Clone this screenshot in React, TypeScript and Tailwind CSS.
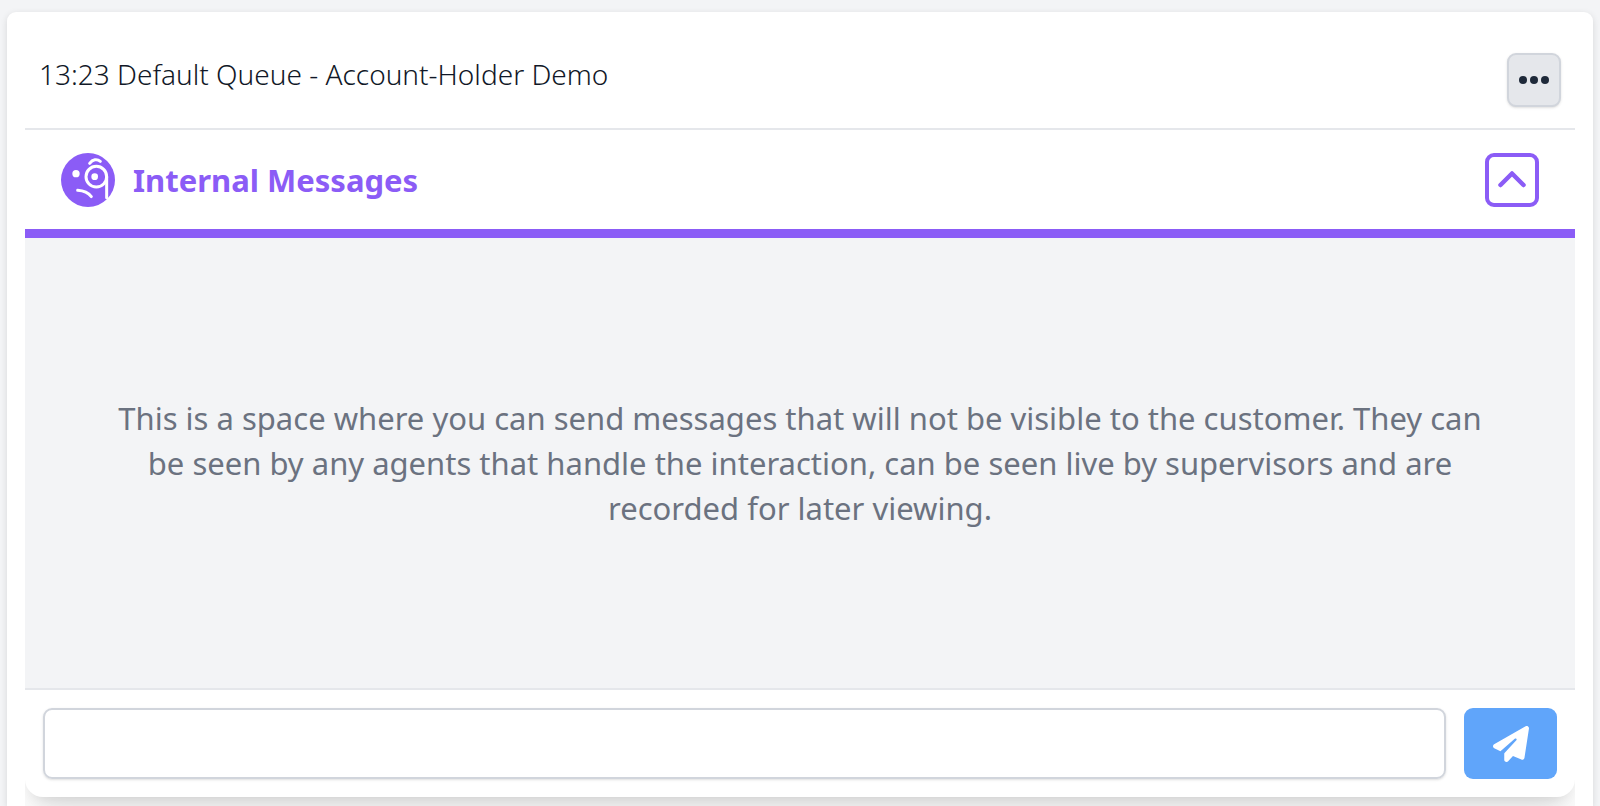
import { useState } from "react";
import { FaPaperPlane } from "react-icons/fa6";

const EMPTY_TEXT =
  "This is a space where you can send messages that will not be visible to the customer. They can be seen by any agents that handle the interaction, can be seen live by supervisors and are recorded for later viewing.";

function MonocleIcon({ className }: { className?: string }) {
  return (
    <svg viewBox="0 0 162 162" className={className} fill="none" aria-hidden="true">
      <circle cx="81" cy="81" r="81" fill="currentColor" />
      <circle cx="45" cy="62" r="11" fill="white" />
      <circle cx="106" cy="71" r="31" stroke="white" strokeWidth="9" />
      <circle cx="101" cy="71" r="10" fill="white" />
      <g stroke="white" strokeWidth="9" strokeLinecap="round">
        <path d="M137 71V134" />
        <path d="M86 31C95 19 108 17 118 25" />
        <path d="M50 112C68 113 82 119 91 131" />
      </g>
    </svg>
  );
}

function DotsIcon({ className }: { className?: string }) {
  return (
    <svg viewBox="0 0 32 8" className={className} fill="currentColor" aria-hidden="true">
      <circle cx="5" cy="4" r="4" />
      <circle cx="16" cy="4" r="4" />
      <circle cx="27" cy="4" r="4" />
    </svg>
  );
}

export default function App() {
  const [open, setOpen] = useState(true);
  const [message, setMessage] = useState("");

  return (
    <main className="min-h-screen overflow-hidden bg-gray-100 px-[7px] pt-3 font-['Noto_Sans',sans-serif]">
      <div className="rounded-t-[9px] bg-white px-[18px] pt-[41px] shadow-[0_2px_7px_rgba(0,0,0,0.12)]">
        <header className="flex items-start justify-between border-b-2 border-gray-200 pr-[14px] pb-[21px] pl-[14px]">
          <h1 className="text-[28px] leading-[42px] font-light text-[#111827]">
            13:23 Default Queue - Account-Holder Demo
          </h1>
          <button
            type="button"
            aria-label="More options"
            className="flex size-[54px] items-center justify-center rounded-[9px] border-2 border-gray-300 bg-gray-200 text-gray-800 shadow-sm"
          >
            <DotsIcon className="w-8" />
          </button>
        </header>

        <section className="overflow-hidden pb-[9px]">
          <div className="rounded-b-[18px] bg-white shadow-[0_22px_34px_-7px_rgba(0,0,0,0.12),0_9px_14px_-9px_rgba(0,0,0,0.12)]">
            <div className="flex items-center gap-[18px] border-b-[9px] border-[#8b5cf6] px-9 pt-[23px] pb-[22px] text-[#8b5cf6]">
              <MonocleIcon className="size-[54px]" />
              <h2 className="flex-1 text-[31px] leading-[45px] font-bold">Internal Messages</h2>
              <button
                type="button"
                aria-label="Toggle internal messages"
                aria-expanded={open}
                onClick={() => setOpen(!open)}
                className="flex size-[54px] items-center justify-center rounded-[9px] border-4 border-[#8b5cf6]"
              >
                <svg
                  viewBox="0 0 28 20"
                  className={open ? "w-7" : "w-7 rotate-180"}
                  fill="none"
                  stroke="currentColor"
                  strokeWidth="4.5"
                  strokeLinecap="round"
                  strokeLinejoin="round"
                  aria-hidden="true"
                >
                  <path d="M2.5 15L14 3.5L25.5 15" />
                </svg>
              </button>
            </div>

            {open && (
              <>
                <div className="flex min-h-[452px] items-center justify-center border-b-2 border-gray-200 bg-gray-100 px-[72px]">
                  <p className="text-center text-[31px] leading-[45px] text-[#6b7280]">{EMPTY_TEXT}</p>
                </div>
                <form className="flex gap-[18px] p-[18px]" onSubmit={(e) => e.preventDefault()}>
                  <input
                    type="text"
                    aria-label="Internal message"
                    value={message}
                    onChange={(e) => setMessage(e.target.value)}
                    className="h-[71px] min-w-0 flex-1 rounded-[9px] border-2 border-gray-300 px-[18px] text-[31px] text-gray-800 shadow-sm outline-none"
                  />
                  <button
                    type="submit"
                    aria-label="Send"
                    className="flex w-[93px] items-center justify-center rounded-[9px] bg-[#60a5fa] text-white"
                  >
                    <FaPaperPlane className="size-9" />
                  </button>
                </form>
              </>
            )}
          </div>
        </section>
      </div>
    </main>
  );
}
